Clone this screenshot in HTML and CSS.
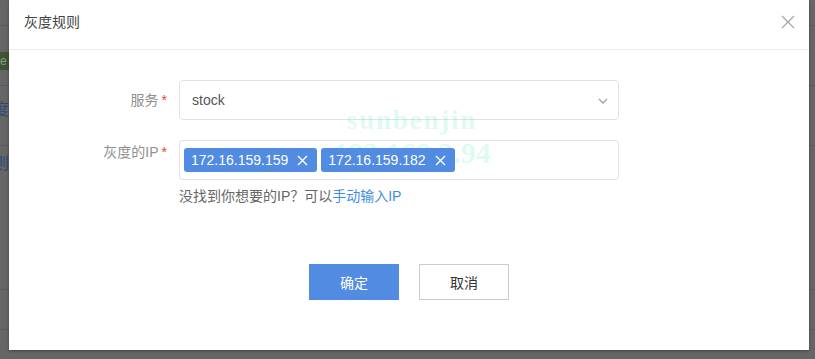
FILE: index.html
```html
<!DOCTYPE html>
<html lang="zh-CN">
<head>
  <meta charset="UTF-8">
  <title>灰度规则</title>
  <link rel="stylesheet" href="styles.css">
</head>
<body>

  <!-- page behind the mask -->
  <div class="page">
    <div class="page-row r1"></div>
    <div class="page-row r2"><span class="page-tag">e</span></div>
    <div class="page-row r3"><span class="page-link">度</span></div>
    <div class="page-row r4"><span class="page-link">则</span></div>
    <div class="page-row r5"></div>
    <div class="page-row r6"></div>
  </div>

  <div class="modal">
    <div class="modal-header">
      <span class="modal-title">灰度规则</span>
      <svg class="modal-close" width="14" height="14" viewBox="0 0 14 14">
        <path d="M1 1 L13 13 M13 1 L1 13" stroke="#a8a8a8" stroke-width="1.3" fill="none"/>
      </svg>
    </div>

    <div class="modal-body">
      <div class="form-row">
        <label class="form-label">服务<em>*</em></label>
        <div class="select">
          <span>stock</span>
          <svg width="10" height="6" viewBox="0 0 10 6">
            <path d="M1 1 L5 5 L9 1" stroke="#a0a0a0" stroke-width="1.3" fill="none"/>
          </svg>
        </div>
      </div>

      <div class="form-row">
        <label class="form-label top">灰度的IP<em>*</em></label>
        <div class="field">
          <div class="tags-input">
            <span class="tag">172.16.159.159
              <svg width="11" height="11" viewBox="0 0 11 11"><path d="M1 1 L10 10 M10 1 L1 10" stroke="#fff" stroke-width="1.4"/></svg>
            </span>
            <span class="tag">172.16.159.182
              <svg width="11" height="11" viewBox="0 0 11 11"><path d="M1 1 L10 10 M10 1 L1 10" stroke="#fff" stroke-width="1.4"/></svg>
            </span>
          </div>
          <p class="help">没找到你想要的IP？可以<a class="help-link" href="#">手动输入IP</a></p>
        </div>
      </div>
    </div>

    <div class="modal-footer">
      <button class="btn btn-primary">确定</button>
      <button class="btn">取消</button>
    </div>

    <div class="watermark">
      <div class="wm-name">sunbenjin</div>
      <div class="wm-ip">192.168.3.94</div>
    </div>
  </div>

</body>
</html>
```

FILE: styles.css
```css
html, body {
  margin: 0;
  height: 100%;
  overflow: hidden;
}
body {
  background: #666;
  font-family: "Liberation Sans", "Noto Sans CJK SC", sans-serif;
  font-size: 14px;
}

/* page under the mask */
.page-row {
  border-bottom: 1px solid #5c5c5c;
  box-sizing: border-box;
}
.r1 { height: 26px; }
.r2 { height: 60px; padding-top: 26px; border-bottom: 1px solid #4a5c7a; }
.r3 { height: 60px; padding-top: 10px; }
.r4 { height: 144px; padding-top: 4px; }
.r5 { height: 40px; }
.r6 { height: 40px; }
.page-tag {
  display: inline-block;
  background: #3d5534;
  color: #8a9a84;
  width: 9px;
  height: 18px;
  line-height: 18px;
  font-size: 12px;
  overflow: hidden;
}
.page-link {
  display: inline-block;
  width: 9px;
  overflow: hidden;
  color: #2e4a78;
  font-size: 16px;
  direction: rtl;
}

/* dialog */
.modal {
  position: absolute;
  left: 9px;
  top: 0;
  width: 800px;
  height: 350px;
  background: #fff;
  box-shadow: 0 1px 3px rgba(0,0,0,0.35);
}
.modal-header {
  display: flex;
  justify-content: space-between;
  align-items: center;
  height: 50px;
  padding: 0 14px 5px 15px;
  box-sizing: border-box;
  border-bottom: 1px solid #ececec;
}
.modal-title {
  color: #444;
  font-size: 14px;
  line-height: 20px;
}
.modal-close {
  margin-top: -1px;
}

.modal-body {
  padding-top: 30px;
}
.form-row {
  display: flex;
  margin-bottom: 20px;
}
.form-row:last-child {
  margin-bottom: 0;
}
.form-label {
  width: 158px;
  margin-right: 12px;
  text-align: right;
  color: #8f8f8f;
  line-height: 40px;
}
.form-label.top {
  line-height: 24px;
}
.form-label em {
  font-style: normal;
  color: #f04134;
  margin-left: 3px;
}

.select {
  width: 440px;
  height: 40px;
  box-sizing: border-box;
  border: 1px solid #e1e1ea;
  border-radius: 4px;
  padding: 0 10px 0 12px;
  display: flex;
  align-items: center;
  justify-content: space-between;
  color: #555;
}
.select svg {
  margin-top: 1px;
}

.field {
  width: 440px;
}
.tags-input {
  height: 40px;
  box-sizing: border-box;
  border: 1px solid #e1e1ea;
  border-radius: 4px;
  padding: 7px 4px;
  display: flex;
  gap: 4px;
}
.tag {
  position: relative;
  z-index: 2;
  display: inline-flex;
  align-items: center;
  gap: 9px;
  height: 24px;
  padding: 0 9px 0 7px;
  background: #528be2;
  color: #fff;
  border-radius: 3px;
  font-size: 14px;
}
.help {
  margin: 6px 0 0;
  line-height: 20px;
  color: #666;
}
.help-link {
  color: #3f8ee0;
  text-decoration: none;
}

.modal-footer {
  display: flex;
  justify-content: center;
  gap: 20px;
  margin-top: 58px;
}
.btn {
  width: 90px;
  height: 36px;
  border: 1px solid #ccc;
  background: #fff;
  color: #333;
  font-family: inherit;
  font-size: 14px;
  border-radius: 0;
}
.btn-primary {
  background: #528be2;
  border-color: #528be2;
  color: #fff;
}

.watermark {
  position: absolute;
  left: 319px;
  top: 104px;
  width: 168px;
  text-align: center;
  font-family: "Liberation Serif", serif;
  font-weight: bold;
  color: rgba(50, 225, 175, 0.17);
  pointer-events: none;
}
.wm-name {
  font-size: 27px;
  line-height: 32px;
  letter-spacing: 1.8px;
}
.wm-ip {
  font-size: 30px;
  line-height: 34px;
}
```
